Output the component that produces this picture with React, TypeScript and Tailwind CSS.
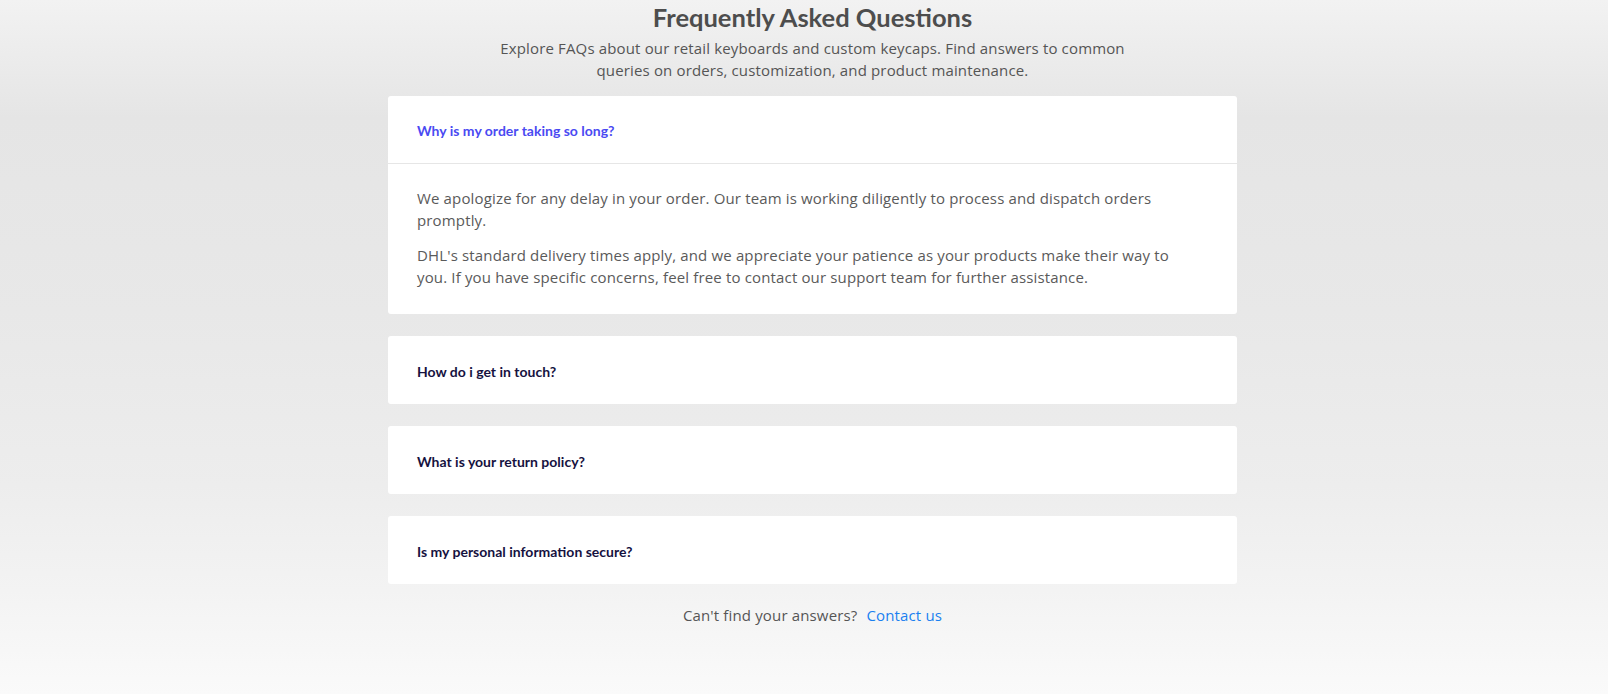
import { useState } from "react";

const faqs = [
  {
    q: "Why is my order taking so long?",
    a: [
      "We apologize for any delay in your order. Our team is working diligently to process and dispatch orders promptly.",
      "DHL's standard delivery times apply, and we appreciate your patience as your products make their way to you. If you have specific concerns, feel free to contact our support team for further assistance.",
    ],
  },
  { q: "How do i get in touch?", a: ["You can reach us through the contact form or by email."] },
  { q: "What is your return policy?", a: ["Returns are accepted within 30 days of delivery."] },
  { q: "Is my personal information secure?", a: ["Yes, your data is encrypted and never shared."] },
];

export default function App() {
  const [open, setOpen] = useState(0);

  return (
    <div className="min-h-[694px] w-full bg-[linear-gradient(180deg,#f2f2f2_0%,#e5e5e5_17%,#e8e8e8_45%,#ededed_70%,#f3f3f3_85%,#fafafa_100%)] pl-[17px] font-['Open_Sans',sans-serif] tracking-[0.15px]">
      <div className="mx-auto flex w-[849px] flex-col items-center">
        {/* heading */}
        <h1 className="mt-[1px] font-['Lato',sans-serif] text-[25.5px] font-bold leading-[32px] tracking-normal text-[#4d4d4d]">
          Frequently Asked Questions
        </h1>
        <p className="mt-[5px] w-[650px] text-center text-[15px] leading-[21.5px] text-[#555]">
          Explore FAQs about our retail keyboards and custom keycaps. Find answers to common queries on orders,
          customization, and product maintenance.
        </p>

        {/* accordion */}
        <div className="mt-[15px] flex w-full flex-col gap-[22px]">
          {faqs.map((item, i) => (
            <div key={item.q} className="overflow-hidden rounded-[3px] bg-white">
              <button
                onClick={() => setOpen(open === i ? -1 : i)}
                className={`flex h-[68px] w-full items-center px-[29px] pt-[2px] text-left font-['Lato',sans-serif] text-[14px] font-bold tracking-normal ${
                  open === i ? "border-b border-[#e6e6e6] text-[#4a4af2]" : "text-[#16123f]"
                }`}
              >
                {item.q}
              </button>
              {open === i && (
                <div className="flex flex-col gap-[14px] pt-[24px] pr-[60px] pb-[26px] pl-[29px] text-[15px] leading-[21.5px] text-[#5a5a5a]">
                  {item.a.map((p) => (
                    <p key={p}>{p}</p>
                  ))}
                </div>
              )}
            </div>
          ))}
        </div>

        {/* footer */}
        <p className="mt-[20px] text-[15px] leading-[22px] text-[#555]">
          Can't find your answers?
          <a href="#" className="ml-[9px] text-[#1a80f0]">
            Contact us
          </a>
        </p>
      </div>
    </div>
  );
}
